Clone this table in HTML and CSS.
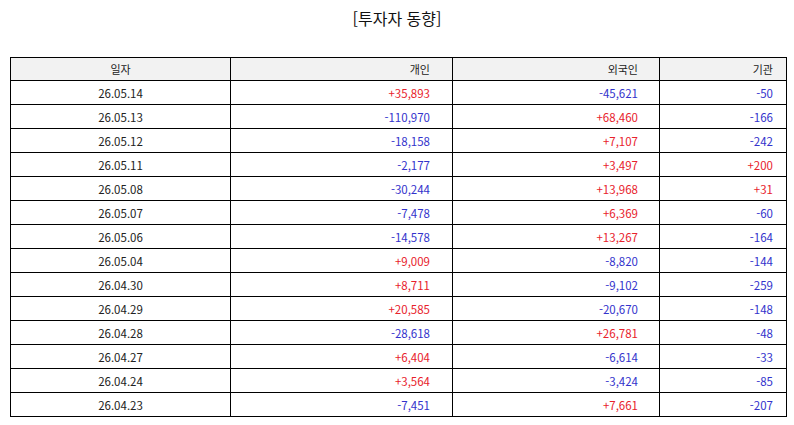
FILE: index.html
```html
<!DOCTYPE html>
<html lang="ko">
<head>
<meta charset="utf-8">
<title>투자자 동향</title>
<link rel="stylesheet" href="styles.css">
</head>
<body>
<h1 class="title">[투자자 동향]</h1>
<table class="grid">
  <colgroup>
    <col class="c-date"><col class="c-ind"><col class="c-for"><col class="c-inst">
  </colgroup>
  <thead>
    <tr class="head">
      <th class="date">일자</th>
      <th class="num ind">개인</th>
      <th class="num for">외국인</th>
      <th class="num inst">기관</th>
    </tr>
  </thead>
  <tbody>
    <tr><td class="date">26.05.14</td><td class="num ind up">+35,893</td><td class="num for dn">-45,621</td><td class="num inst dn">-50</td></tr>
    <tr><td class="date">26.05.13</td><td class="num ind dn">-110,970</td><td class="num for up">+68,460</td><td class="num inst dn">-166</td></tr>
    <tr><td class="date">26.05.12</td><td class="num ind dn">-18,158</td><td class="num for up">+7,107</td><td class="num inst dn">-242</td></tr>
    <tr><td class="date">26.05.11</td><td class="num ind dn">-2,177</td><td class="num for up">+3,497</td><td class="num inst up">+200</td></tr>
    <tr><td class="date">26.05.08</td><td class="num ind dn">-30,244</td><td class="num for up">+13,968</td><td class="num inst up">+31</td></tr>
    <tr><td class="date">26.05.07</td><td class="num ind dn">-7,478</td><td class="num for up">+6,369</td><td class="num inst dn">-60</td></tr>
    <tr><td class="date">26.05.06</td><td class="num ind dn">-14,578</td><td class="num for up">+13,267</td><td class="num inst dn">-164</td></tr>
    <tr><td class="date">26.05.04</td><td class="num ind up">+9,009</td><td class="num for dn">-8,820</td><td class="num inst dn">-144</td></tr>
    <tr><td class="date">26.04.30</td><td class="num ind up">+8,711</td><td class="num for dn">-9,102</td><td class="num inst dn">-259</td></tr>
    <tr><td class="date">26.04.29</td><td class="num ind up">+20,585</td><td class="num for dn">-20,670</td><td class="num inst dn">-148</td></tr>
    <tr><td class="date">26.04.28</td><td class="num ind dn">-28,618</td><td class="num for up">+26,781</td><td class="num inst dn">-48</td></tr>
    <tr><td class="date">26.04.27</td><td class="num ind up">+6,404</td><td class="num for dn">-6,614</td><td class="num inst dn">-33</td></tr>
    <tr><td class="date">26.04.24</td><td class="num ind up">+3,564</td><td class="num for dn">-3,424</td><td class="num inst dn">-85</td></tr>
    <tr><td class="date">26.04.23</td><td class="num ind dn">-7,451</td><td class="num for up">+7,661</td><td class="num inst dn">-207</td></tr>
  </tbody>
</table>
</body>
</html>
```

FILE: styles.css
```css
html, body {
  margin: 0;
  padding: 0;
  background: #ffffff;
}

body {
  font-family: "Noto Sans CJK KR", "Noto Sans", sans-serif;
  color: #222222;
}

.title {
  margin: 0 0 27px;
  padding-top: 6px;
  font-size: 16px;
  line-height: 24px;
  font-weight: normal;
  text-align: center;
  color: #111111;
}

.grid {
  margin-left: 10px;
  width: 776px;
  table-layout: fixed;
  border-collapse: collapse;
  border: 1px solid #000000;
  font-size: 11.5px;
}

.c-date { width: 220px; }
.c-ind { width: 222px; }
.c-for { width: 207px; }
.c-inst { width: 127px; }

.grid th,
.grid td {
  border: 1px solid #000000;
  padding: 0;
  line-height: 14px;
  font-weight: normal;
  white-space: nowrap;
}

.grid .head th {
  height: 22px;
  background: #f2f2f2;
  color: #222222;
  font-size: 11px;
}

.grid td {
  height: 23px;
}

.date { text-align: center; }
.num { text-align: right; }
.ind { padding-right: 22px !important; }
.for { padding-right: 21px !important; }
.inst { padding-right: 13px !important; }

.up { color: #e8222c; }
.dn { color: #3333cc; }
```
